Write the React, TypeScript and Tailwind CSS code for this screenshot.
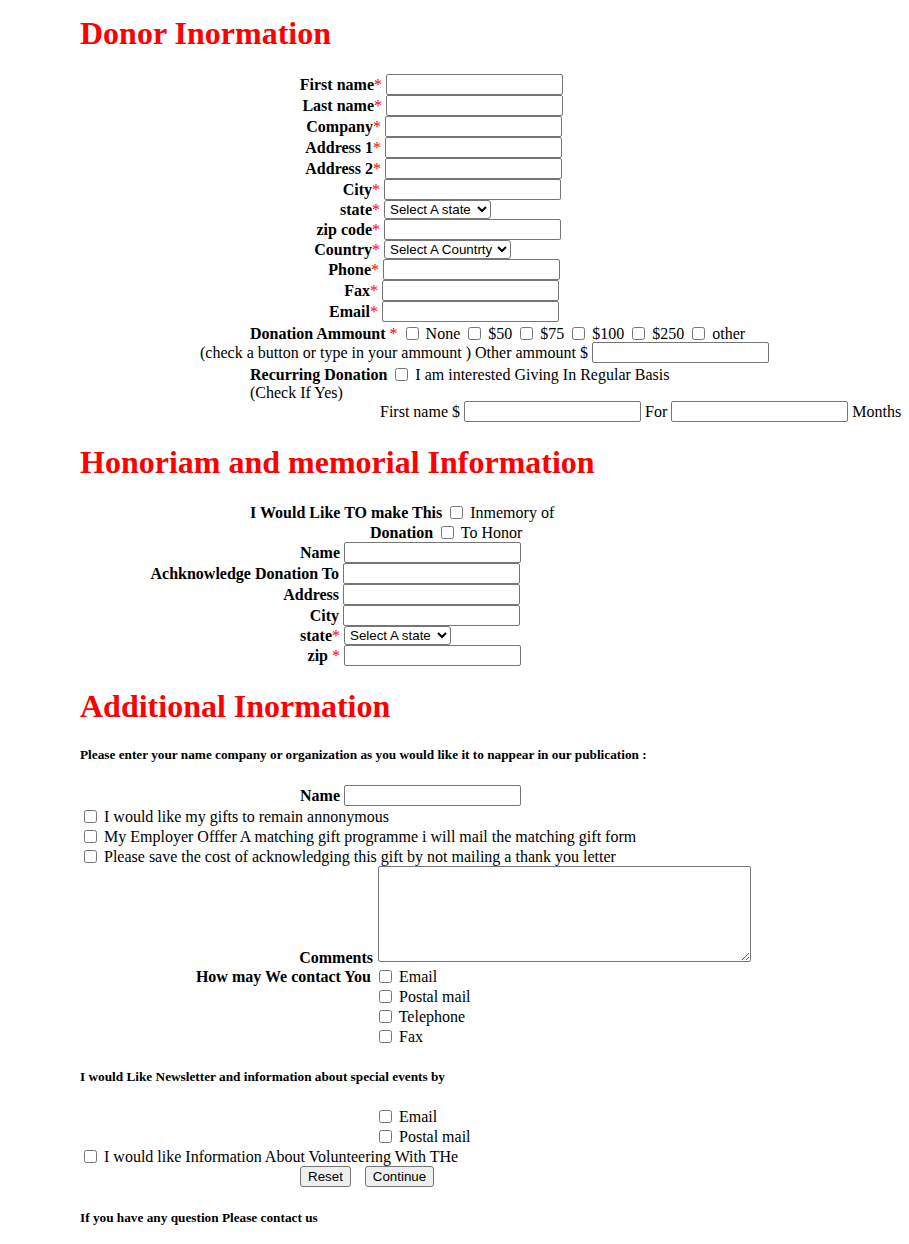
import React from "react";

const inputCls =
  "w-[177px] h-[21px] shrink-0 border border-[#767676] rounded-[2px] bg-white px-[2px] text-[13.33px] font-['Liberation_Sans',Arial,sans-serif]";
const selectCls =
  "h-[19px] shrink-0 border border-[#767676] rounded-[3px] bg-white text-black text-[13.33px] font-['Liberation_Sans',Arial,sans-serif] pl-[1px]";
const line = "h-[20px] leading-[20px] pt-[1px] whitespace-nowrap";

function Cb() {
  return <input type="checkbox" className="ml-[4px] mr-[3px] align-[-1px]" />;
}

function Req({ spaced }: { spaced?: boolean }) {
  return (
    <span className="font-normal text-[#ff0000]">
      {spaced ? " *" : "*"}
    </span>
  );
}

function Field({
  label,
  lw,
  req = true,
  spaced,
  select,
  selectW,
}: {
  label: string;
  lw: string;
  req?: boolean;
  spaced?: boolean;
  select?: string;
  selectW?: string;
}) {
  return (
    <div className={select ? "flex items-center h-[19px]" : "flex items-center h-[21px]"}>
      <span className={lw + " shrink-0 text-right font-bold whitespace-nowrap leading-[18px]"}>
        {label}
        {req && <Req spaced={spaced} />}
      </span>
      {select ? (
        <select className={selectCls + " ml-[4px] " + selectW} defaultValue="">
          <option value="">{select}</option>
        </select>
      ) : (
        <input type="text" className={inputCls + " ml-[4px]"} />
      )}
    </div>
  );
}

function Heading({ children, mt, pt }: { children: React.ReactNode; mt?: string; pt?: string }) {
  return (
    <h1
      className={
        "pl-[80px] h-[37px] text-[32px] leading-[37px] font-bold text-[#ff0000] whitespace-nowrap " +
        (mt ?? "") +
        " " +
        (pt ?? "")
      }
    >
      {children}
    </h1>
  );
}

function Small({ children, mt }: { children: React.ReactNode; mt: string }) {
  return (
    <h5 className={"pl-[80px] h-[15px] pt-[2px] text-[13.28px] leading-[15px] font-bold whitespace-nowrap " + mt}>
      {children}
    </h5>
  );
}

export default function App() {
  return (
    <div className="min-h-[1244px] bg-white text-black text-[16px] leading-[normal] font-['Liberation_Serif','Times_New_Roman',serif] pt-[15px] flex flex-col">
      <Heading>Donor Inormation</Heading>

      <div className="mt-[22px] flex flex-col">
        <Field label="First name" lw="w-[382px]" />
        <Field label="Last name" lw="w-[382px]" />
        <Field label="Company" lw="w-[381px]" />
        <Field label="Address 1" lw="w-[381px]" />
        <Field label="Address 2" lw="w-[381px]" />
        <Field label="City" lw="w-[380px]" />
        <Field label="state" lw="w-[380px]" select="Select A state" selectW="w-[107px]" />
        <Field label="zip code" lw="w-[380px]" />
        <Field label="Country" lw="w-[380px]" select="Select A Countrty" selectW="w-[127px]" />
        <Field label="Phone" lw="w-[379px]" />
        <Field label="Fax" lw="w-[378px]" />
        <Field label="Email" lw="w-[378px]" />
      </div>

      <div className="h-[20px] leading-[20px] pt-[2px] pl-[250px] whitespace-nowrap">
        <b>Donation Ammount</b> <span className="text-[#ff0000]">*</span> <Cb /> None <Cb /> $50{" "}
        <Cb /> $75 <Cb /> $100 <Cb /> $250 <Cb /> other
      </div>

      <div className="flex items-center h-[21px] pl-[200px] whitespace-nowrap">
        <span>(check a button or type in your ammount ) Other ammount $</span>
        <input type="text" className={inputCls + " ml-[4px]"} />
      </div>

      <div className="h-[19px] leading-[19px] pt-[2px] pl-[250px] whitespace-nowrap">
        <b>Recurring Donation</b> <Cb /> I am interested Giving In Regular Basis
      </div>
      <div className="h-[19px] leading-[19px] pt-[1px] pl-[250px]">(Check If Yes)</div>

      <div className="flex items-center h-[21px] pl-[380px] whitespace-nowrap">
        <span>First name $</span>
        <input type="text" className={inputCls + " ml-[4px]"} />
        <span className="ml-[4px]">For</span>
        <input type="text" className={inputCls + " ml-[4px]"} />
        <span className="ml-[4px]">Months</span>
      </div>

      <Heading mt="mt-[21px]" pt="pt-[1px]">
        Honoriam and memorial Information
      </Heading>

      <div className={"mt-[22px] pl-[250px] " + line}>
        <b>I Would Like TO make This</b> <Cb /> Inmemory of
      </div>
      <div className={"pl-[370px] " + line}>
        <b>Donation</b> <Cb /> To Honor
      </div>

      <div className="flex flex-col">
        <Field label="Name" lw="w-[340px]" req={false} />
        <Field label="Achknowledge Donation To" lw="w-[339px]" req={false} />
        <Field label="Address" lw="w-[339px]" req={false} />
        <Field label="City" lw="w-[339px]" req={false} />
        <Field label="state" lw="w-[340px]" select="Select A state" selectW="w-[107px]" />
        <Field label="zip" lw="w-[340px]" spaced />
      </div>

      <Heading mt="mt-[21px]" pt="pt-[1px]">
        Additional Inormation
      </Heading>

      <Small mt="mt-[21px]">
        Please enter your name company or organization as you would like it to nappear in our publication :
      </Small>

      <div className="mt-[25px]">
        <Field label="Name" lw="w-[340px]" req={false} />
      </div>

      <div className={"pl-[80px] " + line}>
        <Cb /> I would like my gifts to remain annonymous
      </div>
      <div className={"pl-[80px] " + line}>
        <Cb /> My Employer Offfer A matching gift programme i will mail the matching gift form
      </div>
      <div className={"pl-[80px] " + line}>
        <Cb /> Please save the cost of acknowledging this gift by not mailing a thank you letter
      </div>

      <div className="flex items-end h-[100px]">
        <span className="w-[373px] shrink-0 text-right font-bold leading-[12px] mb-[2px]">Comments</span>
        <textarea className="self-start ml-[5px] w-[373px] h-[96px] border border-[#767676] rounded-[2px] bg-white" />
      </div>

      <div className={line}>
        <span className="inline-block w-[371px] text-right font-bold">How may We contact You</span> <Cb /> Email
      </div>
      <div className={"pl-[375px] " + line}>
        <Cb /> Postal mail
      </div>
      <div className={"pl-[375px] " + line}>
        <Cb /> Telephone
      </div>
      <div className={"pl-[375px] " + line}>
        <Cb /> Fax
      </div>

      <Small mt="mt-[21px]">I would Like Newsletter and information about special events by</Small>

      <div className={"mt-[24px] pl-[375px] " + line}>
        <Cb /> Email
      </div>
      <div className={"pl-[375px] " + line}>
        <Cb /> Postal mail
      </div>
      <div className={"pl-[80px] " + line}>
        <Cb /> I would like Information About Volunteering With THe
      </div>

      <div className="flex items-center h-[21px] pl-[300px] gap-[14px]">
        <button
          type="reset"
          className="w-[51px] h-[21px] bg-[#efefef] border border-[#767676] rounded-[3px] text-[13.33px] font-['Liberation_Sans',Arial,sans-serif]"
        >
          Reset
        </button>
        <button
          type="button"
          className="w-[69px] h-[21px] bg-[#efefef] border border-[#767676] rounded-[3px] text-[13.33px] font-['Liberation_Sans',Arial,sans-serif]"
        >
          Continue
        </button>
      </div>

      <Small mt="mt-[21px]">If you have any question Please contact us</Small>
    </div>
  );
}
